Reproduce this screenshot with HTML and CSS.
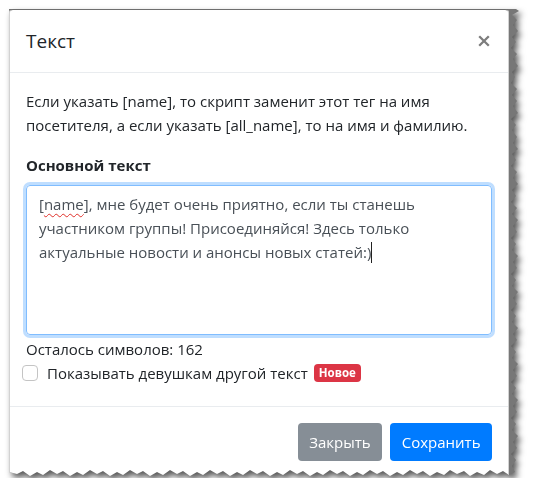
FILE: index.html
```html
<!DOCTYPE html>
<html lang="ru">
<head>
<meta charset="utf-8">
<title>Текст</title>
<link rel="stylesheet" href="styles.css">
</head>
<body>
<div class="stage">
  <div class="paper">
    <div class="sheet">
      <div class="modal">
        <div class="modal-header">
          <h5 class="modal-title">Текст</h5>
          <span class="close" aria-label="Закрыть">
            <svg width="12" height="12" viewBox="0 0 12 12"><path d="M1.2 1.2 L10.8 10.8 M10.8 1.2 L1.2 10.8" stroke="#7d7d7d" stroke-width="2.3" stroke-linecap="butt" fill="none"/></svg>
          </span>
        </div>
        <div class="modal-body">
          <p class="hint">Если указать [name], то скрипт заменит этот тег на имя посетителя, а если указать [all_name], то на имя и фамилию.</p>
          <label class="field-label">Основной текст</label>
          <div class="textarea">[<span class="typo">name</span>], мне будет очень приятно, если ты станешь участником группы! Присоединяйся! Здесь только актуальные новости и анонсы новых статей:)<span class="caret"></span></div>
          <div class="counter">Осталось символов: 162</div>
          <label class="check">
            <span class="check-box"></span>
            <span class="check-text">Показывать девушкам другой текст</span>
            <span class="badge">Новое</span>
          </label>
        </div>
        <div class="modal-footer">
          <button class="btn btn-secondary" type="button">Закрыть</button>
          <button class="btn btn-primary" type="button">Сохранить</button>
        </div>
      </div>
    </div>
  </div>
</div>
</body>
</html>
```
FILE: styles.css
```css
html, body {
  margin: 0;
  background: #ffffff;
}

body {
  font-family: "Open Sans", "Noto Sans", sans-serif;
  font-size: 15px;
  line-height: 24px;
  color: #212529;
}

.stage {
  padding: 9px 0 0 9px;
}

.paper {
  width: 510px;
  filter: drop-shadow(3px 4px 3px rgba(0, 0, 0, 0.65));
}

.sheet {
  background: #777777;
  clip-path: polygon(
    0 0, 507px 0, 510px 2px,
    503px 6px, 508px 11px, 504px 16px, 509px 22px, 503px 28px, 507px 33px, 502px 39px,
    508px 45px, 504px 50px, 509px 57px, 503px 63px, 506px 68px, 502px 74px, 508px 80px,
    503px 86px, 508px 92px, 504px 97px, 509px 104px, 502px 110px, 507px 116px, 503px 121px,
    508px 128px, 504px 134px, 509px 140px, 503px 145px, 507px 151px, 502px 157px, 508px 163px,
    504px 169px, 509px 175px, 503px 181px, 507px 187px, 502px 193px, 508px 199px, 503px 205px,
    509px 211px, 504px 217px, 508px 223px, 502px 229px, 507px 235px, 503px 241px, 509px 247px,
    504px 253px, 508px 259px, 502px 265px, 507px 271px, 503px 277px, 509px 283px, 504px 289px,
    508px 295px, 502px 301px, 507px 307px, 503px 313px, 509px 319px, 504px 325px, 508px 331px,
    502px 337px, 507px 343px, 503px 349px, 509px 355px, 504px 361px, 508px 367px, 502px 373px,
    507px 379px, 503px 385px, 509px 391px, 504px 397px, 508px 403px, 502px 409px, 507px 415px,
    503px 421px, 509px 427px, 504px 433px, 508px 439px, 502px 445px, 507px 451px, 503px 457px,
    506px 463px,
    500px 466px, 494px 462px, 488px 465px, 481px 461px, 475px 466px, 468px 463px, 461px 467px,
    455px 462px, 448px 465px, 441px 461px, 435px 466px, 428px 463px, 421px 467px, 414px 462px,
    408px 465px, 401px 461px, 394px 466px, 388px 463px, 381px 467px, 374px 462px, 368px 465px,
    361px 461px, 354px 466px, 348px 463px, 341px 467px, 334px 462px, 328px 465px, 321px 461px,
    314px 466px, 308px 463px, 301px 467px, 294px 462px, 288px 465px, 281px 461px, 274px 466px,
    268px 463px, 261px 467px, 254px 462px, 248px 465px, 241px 461px, 234px 466px, 228px 463px,
    221px 467px, 214px 462px, 208px 465px, 201px 461px, 194px 466px, 188px 463px, 181px 467px,
    174px 462px, 168px 465px, 161px 461px, 154px 466px, 148px 463px, 141px 467px, 134px 462px,
    128px 465px, 121px 461px, 114px 466px, 108px 463px, 101px 467px, 94px 462px, 88px 465px,
    81px 461px, 74px 466px, 68px 463px, 61px 467px, 54px 462px, 48px 465px, 41px 461px,
    34px 466px, 28px 463px, 21px 467px, 14px 462px, 8px 465px, 0 463px
  );
}

.modal {
  width: 500px;
  box-sizing: border-box;
  background: #ffffff;
  border: 1px solid #d2d2d2;
  border-top-color: #6e6e6e;
  border-radius: 4px 4px 0 0;
}

.modal-header {
  display: flex;
  align-items: center;
  justify-content: space-between;
  padding: 16px;
  border-bottom: 1px solid #e9ecef;
}

.modal-title {
  margin: 0;
  font-size: 19px;
  font-weight: 400;
  line-height: 30px;
}

.close {
  display: flex;
  margin-right: 2px;
}

.modal-body {
  padding: 16px;
}

.hint {
  margin: 0 0 16px;
}

.field-label {
  display: block;
  font-weight: 700;
  margin-bottom: 8px;
}

.textarea {
  height: 150px;
  box-sizing: border-box;
  padding: 6px 12px;
  border: 1px solid #80bdff;
  border-radius: 4px;
  box-shadow: 0 0 0 3px rgba(0, 123, 255, 0.25);
  color: #495057;
}

.typo {
  text-decoration: underline wavy #e0302a;
  text-decoration-thickness: 1px;
  text-underline-offset: 3px;
}

.caret {
  display: inline-block;
  width: 1px;
  height: 21px;
  background: #222;
  vertical-align: -5px;
}

.counter {
  margin-top: 2px;
}

.check {
  display: flex;
  align-items: center;
  margin-left: -4px;
  margin-bottom: 5px;
}

.check-box {
  width: 16px;
  height: 16px;
  box-sizing: border-box;
  border: 1px solid #c4c4c4;
  border-radius: 4px;
  margin-right: 9px;
  background: #fff;
}

.badge {
  margin-left: 6px;
  padding: 3px 5px;
  border-radius: 4px;
  background: #dc3545;
  color: #ffffff;
  font-size: 11.5px;
  font-weight: 700;
  line-height: 12px;
}

.modal-footer {
  display: flex;
  justify-content: flex-end;
  gap: 8px;
  padding: 16px;
  border-top: 1px solid #e9ecef;
}

.btn {
  font-family: inherit;
  font-size: 15px;
  line-height: 24px;
  padding: 6px 10.5px;
  border: 1px solid transparent;
  border-radius: 4px;
  color: #ffffff;
}

.btn-secondary {
  background: #868e96;
}

.btn-primary {
  background: #007bff;
}
```
